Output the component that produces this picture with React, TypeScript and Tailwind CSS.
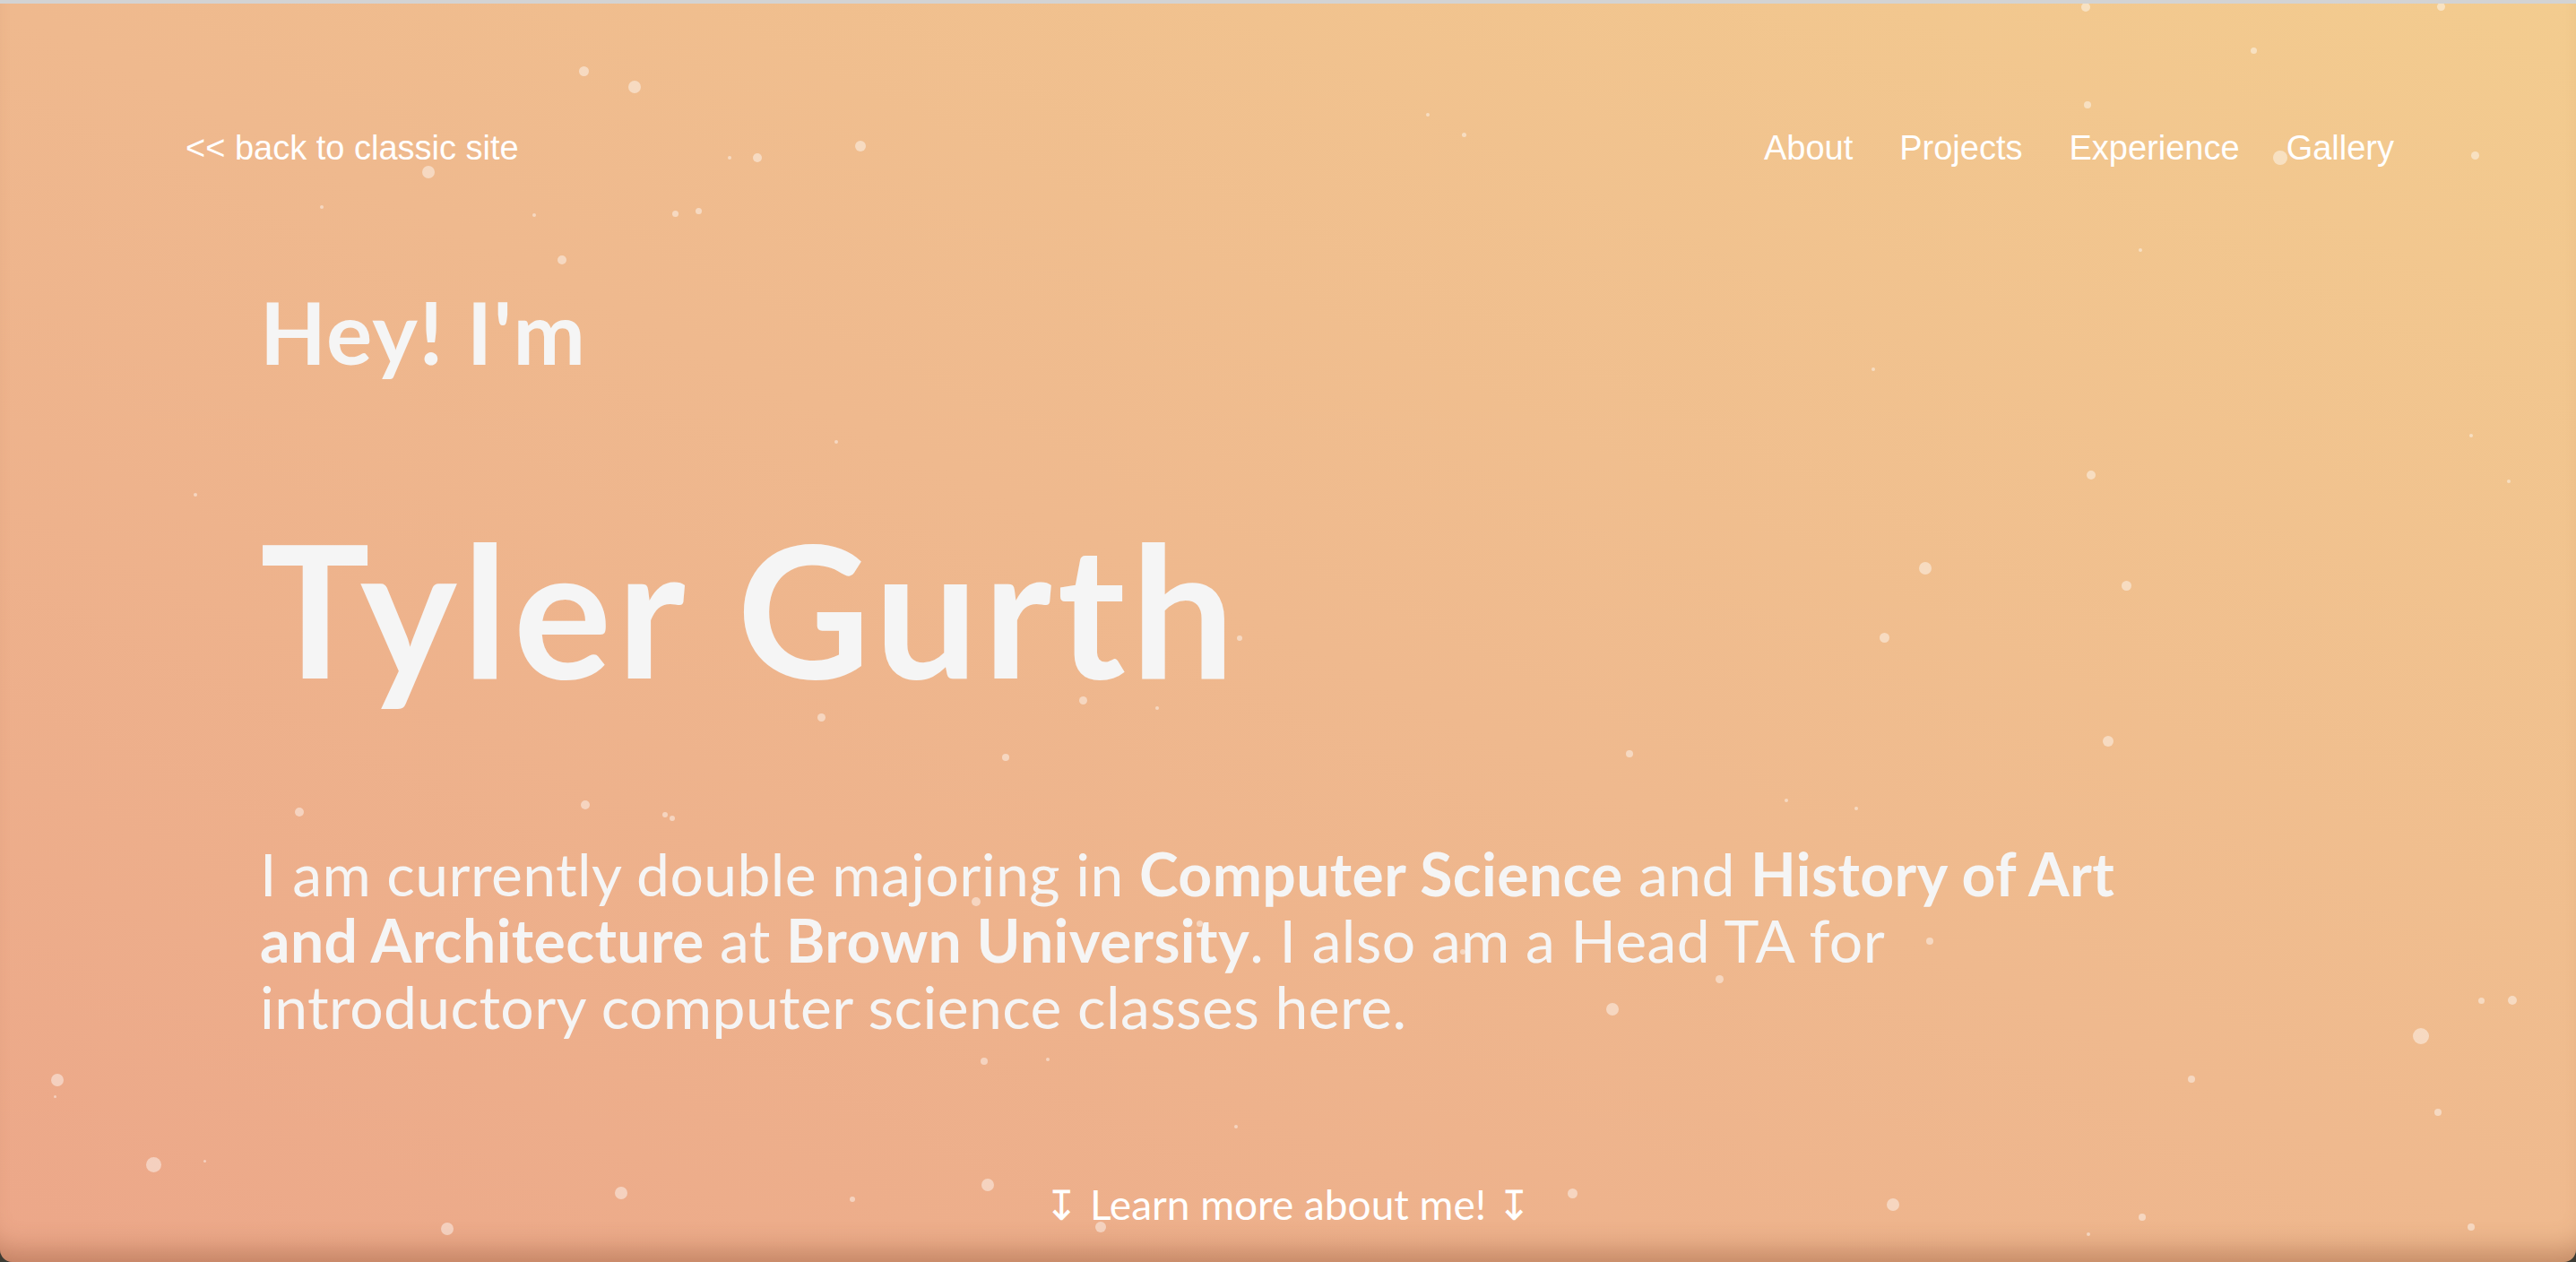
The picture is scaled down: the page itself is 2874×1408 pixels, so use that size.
const dots: [number, number, number][] = [
  [651, 79, 11], [708, 97, 14], [478, 192, 14], [845, 176, 10], [960, 163, 12],
  [753, 238, 7], [779, 235, 7], [627, 290, 10], [359, 231, 4], [596, 240, 4],
  [814, 176, 4], [1593, 128, 4], [1633, 150, 5], [2327, 8, 10], [2514, 56, 7],
  [2544, 176, 16], [2761, 173, 9], [2723, 7, 9], [2329, 117, 8], [2388, 279, 4],
  [2090, 412, 4], [2333, 530, 10], [2757, 486, 4], [2799, 537, 4], [2148, 634, 14],
  [2372, 653, 11], [2102, 711, 11], [2352, 827, 12], [1818, 841, 8], [1993, 893, 4],
  [2071, 902, 4], [933, 493, 4], [218, 552, 4], [334, 906, 10], [653, 898, 10],
  [742, 909, 6], [750, 913, 6], [916, 800, 9], [1122, 845, 8], [1208, 781, 9],
  [1291, 790, 4], [1383, 712, 6], [1089, 1006, 10], [1338, 1030, 7], [2153, 1050, 8],
  [1918, 1092, 9], [1799, 1126, 14], [1632, 1062, 6], [2701, 1156, 18], [2768, 1116, 7],
  [2803, 1116, 10], [2445, 1204, 8], [2720, 1241, 8], [1098, 1184, 8], [1169, 1182, 4],
  [64, 1205, 14], [171, 1299, 17], [1102, 1322, 14], [693, 1331, 14], [499, 1371, 14],
  [951, 1338, 6], [1228, 1369, 12], [1379, 1257, 4], [1754, 1331, 11], [2112, 1344, 14],
  [2390, 1358, 8], [2330, 1377, 4], [2757, 1369, 8], [61, 1223, 3], [228, 1295, 3],
];

const navLinks = ['About', 'Projects', 'Experience', 'Gallery'];

export default function App() {
  return (
    <div className="h-[1408px] w-full bg-[#3d3b33]">
      <div className="relative flex h-full flex-col overflow-hidden rounded-b-[14px] border-t-4 border-[#d3d3d3] bg-[linear-gradient(to_top_right,#eca789,#efb98e_50%,#f3cc8f)] shadow-[inset_0_-34px_30px_-22px_rgba(140,80,50,0.45)]">
        {dots.map(([x, y, d], i) => (
          <span
            key={i}
            className="absolute rounded-full bg-white/45"
            style={{ left: x - d / 2, top: y - 4 - d / 2, width: d, height: d }}
          />
        ))}

        <nav className="relative flex items-center justify-between pl-[207px] pr-[203px] pt-[142px] font-['Liberation_Sans',Arial,sans-serif] text-[38px] leading-none text-white">
          <a href="#">&lt;&lt; back to classic site</a>
          <div className="flex gap-[52px]">
            {navLinks.map(link => (
              <a key={link} href="#">{link}</a>
            ))}
          </div>
        </nav>

        <main className="relative flex flex-col pl-[290px] font-['Trebuchet_MS',Lato,sans-serif] text-[#f5f5f5]">
          <h2 className="mt-[138px] text-[96px] font-bold leading-none tracking-[1.5px]">Hey! I'm</h2>
          <h1 className="mt-[158px] text-[205px] font-bold leading-none tracking-[6px]">Tyler Gurth</h1>
          <p className="mt-[157px] max-w-[2150px] text-[66px] leading-[74px] tracking-[0.4px]">
            I am currently double majoring in <b className="font-bold">Computer Science</b> and{' '}
            <b className="font-bold">History of Art and Architecture</b> at{' '}
            <b className="font-bold">Brown University</b>. I also am a Head TA for introductory computer
            science classes here.
          </p>
        </main>

        <a
          href="#"
          className="relative mt-[161px] self-center font-['Trebuchet_MS',Lato,sans-serif] text-[46px] leading-none text-white"
        >
          ↧ Learn more about me! ↧
        </a>
      </div>
    </div>
  );
}
